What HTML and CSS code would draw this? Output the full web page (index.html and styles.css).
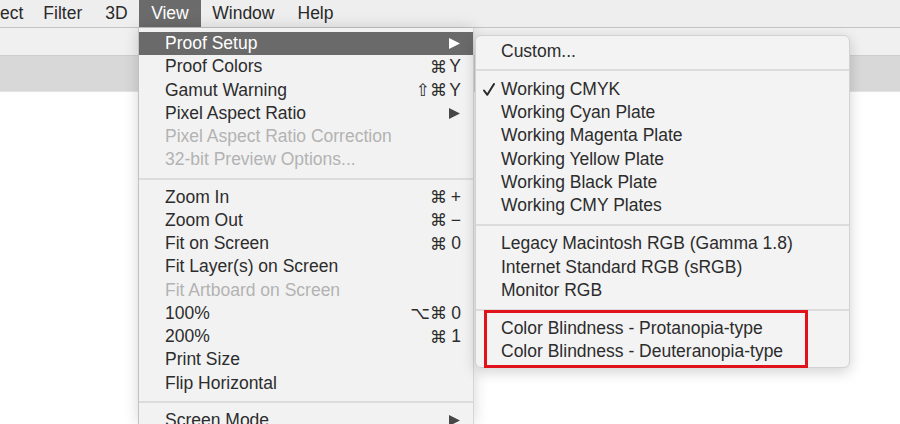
FILE: index.html
```html
<!DOCTYPE html>
<html>
<head>
<meta charset="utf-8">
<link rel="stylesheet" href="styles.css">
</head>
<body>
<div class="app">
  <nav class="menubar">
    <span class="mb-item first">ect</span>
    <span class="mb-item">Filter</span>
    <span class="mb-item">3D</span>
    <span class="mb-item active">View</span>
    <span class="mb-item">Window</span>
    <span class="mb-item">Help</span>
  </nav>
  <div class="optionsbar"></div>
  <div class="tabbar"></div>
  <div class="canvas"></div>

  <div class="menu main-menu">
    <div class="row hl"><span>Proof Setup</span><svg class="arrow" viewBox="0 0 11 11"><polygon points="0,0 11,5.5 0,11"/></svg></div>
    <div class="row"><span>Proof Colors</span><span class="sc"><span class="mod">⌘</span><span class="key">Y</span></span></div>
    <div class="row"><span>Gamut Warning</span><span class="sc"><span class="mod">⇧⌘</span><span class="key">Y</span></span></div>
    <div class="row"><span>Pixel Aspect Ratio</span><svg class="arrow" viewBox="0 0 11 11"><polygon points="0,0 11,5.5 0,11"/></svg></div>
    <div class="row dis"><span>Pixel Aspect Ratio Correction</span></div>
    <div class="row dis"><span>32-bit Preview Options...</span></div>
    <div class="sep"></div>
    <div class="row"><span>Zoom In</span><span class="sc"><span class="mod">⌘</span><span class="key">+</span></span></div>
    <div class="row"><span>Zoom Out</span><span class="sc"><span class="mod">⌘</span><span class="key">−</span></span></div>
    <div class="row"><span>Fit on Screen</span><span class="sc"><span class="mod">⌘</span><span class="key">0</span></span></div>
    <div class="row"><span>Fit Layer(s) on Screen</span></div>
    <div class="row dis"><span>Fit Artboard on Screen</span></div>
    <div class="row"><span>100%</span><span class="sc"><span class="mod">⌥⌘</span><span class="key">0</span></span></div>
    <div class="row"><span>200%</span><span class="sc"><span class="mod">⌘</span><span class="key">1</span></span></div>
    <div class="row"><span>Print Size</span></div>
    <div class="row"><span>Flip Horizontal</span></div>
    <div class="sep"></div>
    <div class="row"><span>Screen Mode</span><svg class="arrow" viewBox="0 0 11 11"><polygon points="0,0 11,5.5 0,11"/></svg></div>
  </div>

  <div class="menu sub-menu">
    <div class="row"><span>Custom...</span></div>
    <div class="sep"></div>
    <div class="row"><svg class="check" viewBox="0 0 12 13"><polyline points="1,7.5 4.3,11.8 11,1"/></svg><span>Working CMYK</span></div>
    <div class="row"><span>Working Cyan Plate</span></div>
    <div class="row"><span>Working Magenta Plate</span></div>
    <div class="row"><span>Working Yellow Plate</span></div>
    <div class="row"><span>Working Black Plate</span></div>
    <div class="row"><span>Working CMY Plates</span></div>
    <div class="sep"></div>
    <div class="row"><span>Legacy Macintosh RGB (Gamma 1.8)</span></div>
    <div class="row"><span>Internet Standard RGB (sRGB)</span></div>
    <div class="row"><span>Monitor RGB</span></div>
    <div class="sep"></div>
    <div class="row"><span>Color Blindness - Protanopia-type</span></div>
    <div class="row"><span>Color Blindness - Deuteranopia-type</span></div>
    <div class="highlight-box"></div>
  </div>
</div>
</body>
</html>
```
FILE: styles.css
```css
* { box-sizing: border-box; }
html, body {
  margin: 0;
  padding: 0;
  width: 900px;
  height: 424px;
  overflow: hidden;
  background: #ffffff;
  font-family: "Liberation Sans", Arial, sans-serif;
  font-size: 17.5px;
  color: #2c2c2c;
}
.app {
  position: relative;
  width: 900px;
  height: 424px;
  display: flex;
  flex-direction: column;
}
.menubar {
  height: 28px;
  background: #eeeeee;
  border-bottom: 1px solid #c4c4c4;
  display: flex;
  align-items: stretch;
  flex: none;
}
.mb-item {
  padding: 0 11.5px;
  display: flex;
  align-items: center;
  color: #2a2a2a;
  line-height: 27px;
}
.mb-item.first {
  padding-left: 0;
  padding-right: 8.5px;
}
.mb-item.active {
  background: #6b6b6b;
  color: #ffffff;
  padding: 0 12px;
}
.optionsbar {
  height: 27px;
  background: #f0f0f0;
  flex: none;
}
.tabbar {
  height: 37px;
  background: #d8d8d8;
  border-top: 1px solid #cdcdcd;
  border-bottom: 1px solid #e4e4e4;
  flex: none;
}
.canvas {
  flex: 1;
  background: #ffffff;
}

.menu {
  position: absolute;
  background: #f2f2f2;
}
.main-menu {
  left: 138px;
  top: 28px;
  width: 336px;
  height: 396px;
  overflow: hidden;
  padding-top: 4px;
  border-left: 1px solid #c2c2c2;
  border-right: 1px solid #d6d6d6;
  box-shadow: 0 0 14px rgba(0, 0, 0, 0.16);
}
.row {
  height: 23.25px;
  display: flex;
  align-items: center;
  justify-content: space-between;
  padding: 0 12px 0 26px;
  white-space: nowrap;
  position: relative;
}
.row.hl {
  background: #6a6a6a;
  color: #ffffff;
}
.row.dis { color: #b3b3b3; }
.sep {
  height: 2px;
  background: #dcdcdc;
  margin: 6px 0;
}
.arrow {
  width: 11px;
  height: 11px;
  fill: #474747;
  margin-right: 1px;
}
.row.hl .arrow { fill: #ffffff; }
.sc {
  display: flex;
  align-items: center;
}
.mod {
  font-family: "DejaVu Sans", sans-serif;
  font-size: 17px;
  text-align: right;
}
.key {
  width: 14px;
  text-align: right;
}

.sub-menu {
  left: 475px;
  top: 35px;
  width: 375px;
  height: 333px;
  padding-top: 3.5px;
  border-radius: 6px;
  background: #f3f3f3;
  border: 1px solid #d2d2d2;
  box-shadow: 0 4px 14px rgba(0, 0, 0, 0.18);
}
.sub-menu .row {
  justify-content: flex-start;
  padding-left: 25px;
}
.sub-menu .sep {
  margin: 6.5px 0;
}
.check {
  position: absolute;
  left: 7px;
  top: 5px;
  width: 12px;
  height: 13px;
  fill: none;
  stroke: #2a2a2a;
  stroke-width: 2;
  stroke-linecap: round;
  stroke-linejoin: round;
}
.highlight-box {
  position: absolute;
  left: 8px;
  top: 274px;
  width: 324px;
  height: 58px;
  border: 3px solid #e0121b;
}
```
